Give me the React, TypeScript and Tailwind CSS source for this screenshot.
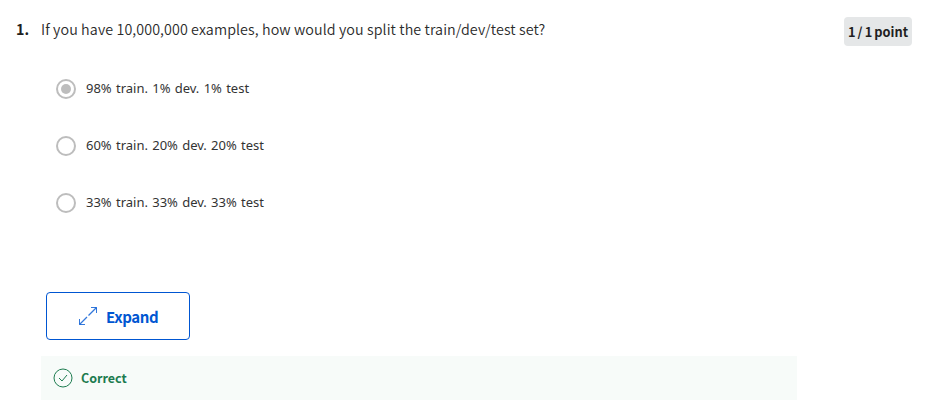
const options = [
  { label: '98% train. 1% dev. 1% test', checked: true },
  { label: '60% train. 20% dev. 20% test', checked: false },
  { label: '33% train. 33% dev. 33% test', checked: false },
];

export default function App() {
  return (
    <main className="h-[408px] w-[925px] overflow-hidden bg-white font-['Noto_Sans_CJK_SC',sans-serif] text-[#1f1f1f]">
      <header className="flex h-[60px] items-start justify-between pl-4 pr-[13px] pt-[17px]">
        <div className="flex whitespace-nowrap pt-[2px] text-[14.3px] leading-5">
          <span className="w-[25px] font-bold">1.</span>
          <span className="font-[350] tracking-[0.09px] text-[#2b2b2b]">If you have 10,000,000 examples, how would you split the train/dev/test set?</span>
        </div>
        <div className="flex h-[29px] w-[68px] items-center justify-center whitespace-nowrap rounded bg-[#e5e7e8] pt-px text-[12.8px] font-bold [word-spacing:-0.8px]">
          1 / 1 point
        </div>
      </header>
      <div className="pl-14 font-['Noto_Sans',sans-serif]">
        {options.map((o) => (
          <label key={o.label} className="flex h-[57px] items-center gap-[10px]">
            <span className="flex size-5 items-center justify-center rounded-full border-2 border-[#bdbdbd]">
              {o.checked && <span className="size-[10px] rounded-full bg-[#bdbdbd]" />}
            </span>
            <span className="pb-px text-[13px] leading-5 text-[#333] [word-spacing:0.9px]">{o.label}</span>
          </label>
        ))}
      </div>
      <button className="ml-[46px] mt-[61px] flex h-12 w-36 items-center rounded border border-[#0056d2] pl-[31px] text-[#0056d2]">
        <svg width="20" height="20" viewBox="0 0 20 20" fill="none" stroke="currentColor" strokeOpacity=".8">
          <path strokeWidth="1.3" d="M10.500 9.500 18.500 1.500M9 11l-7.500 7.500" />
          <path d="M13 1.500h5.500v5.500M1.500 13v5.500h5.500" />
        </svg>
        <span className="ml-2 pt-[2px] text-[15px] font-bold tracking-[-0.4px]">Expand</span>
      </button>
      <section className="ml-[41px] mt-4 flex h-11 w-[756px] items-center bg-[#f7fbf9] pl-3 text-[#1d7c50]">
        <svg width="20" height="20" viewBox="0 0 20 20" fill="none" stroke="currentColor">
          <circle cx="10" cy="10" r="9" /><path d="m6 10 3 3 5-6" />
        </svg>
        <span className="ml-2 text-[12.5px] font-bold">Correct</span>
      </section>
    </main>
  );
}
